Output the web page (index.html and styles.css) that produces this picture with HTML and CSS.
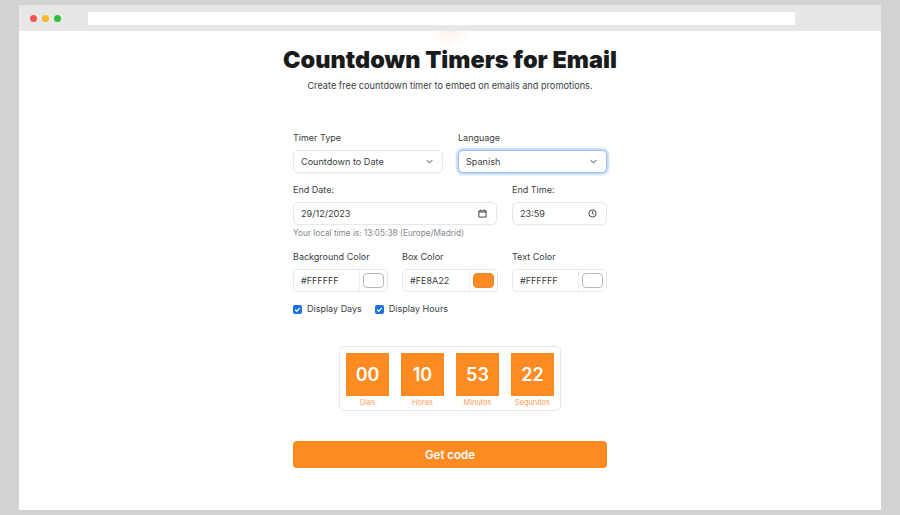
FILE: index.html
```html
<!DOCTYPE html>
<html lang="en">
<head>
    <meta charset="UTF-8">
    <meta name="viewport" content="width=device-width, initial-scale=1.0">
    <title>Countdown Timers for Email</title>
    <link rel="stylesheet" href="styles.css">
</head>
<body>

    <div class="window">
        <div class="titlebar">
            <div class="dots">
                <span class="dot red"></span>
                <span class="dot yellow"></span>
                <span class="dot green"></span>
            </div>
            <div class="urlbar"></div>
        </div>

        <div class="content">
            <h1>Countdown Timers for Email</h1>
            <p class="lead">Create free countdown timer to embed on emails and promotions.</p>

            <div class="form">
                <!-- Type and language -->
                <div class="row row-two">
                    <div class="group">
                        <div class="label">Timer Type</div>
                        <div class="field">
                            <span>Countdown to Date</span>
                            <svg class="chevron" viewBox="0 0 10 6"><path d="M1 1 5 5l4-4"/></svg>
                        </div>
                    </div>
                    <div class="group">
                        <div class="label">Language</div>
                        <div class="field focused">
                            <span>Spanish</span>
                            <svg class="chevron" viewBox="0 0 10 6"><path d="M1 1 5 5l4-4"/></svg>
                        </div>
                    </div>
                </div>

                <!-- End date -->
                <div class="row row-date">
                    <div class="group">
                        <div class="label">End Date:</div>
                        <div class="field">
                            <span>29/12/2023</span>
                            <svg class="icon" viewBox="0 0 10 10"><path d="M1 2h8v7H1zM1 3.4h8M3 .6V2M7 .6V2"/></svg>
                        </div>
                        <div class="hint">Your local time is: 13:05:38 (Europe/Madrid)</div>
                    </div>
                    <div class="group">
                        <div class="label">End Time:</div>
                        <div class="field">
                            <span>23:59</span>
                            <svg class="icon" viewBox="0 0 10 10"><circle cx="5" cy="5" r="4"/><path d="M5 2.6V5l1.7 1"/></svg>
                        </div>
                    </div>
                </div>

                <!-- Colors -->
                <div class="row row-colors">
                    <div class="group">
                        <div class="label">Background Color</div>
                        <div class="color-field">
                            <span class="hex">#FFFFFF</span>
                            <span class="swatch-cell"><span class="swatch"></span></span>
                        </div>
                    </div>
                    <div class="group">
                        <div class="label">Box Color</div>
                        <div class="color-field">
                            <span class="hex">#FE8A22</span>
                            <span class="swatch-cell"><span class="swatch orange"></span></span>
                        </div>
                    </div>
                    <div class="group">
                        <div class="label">Text Color</div>
                        <div class="color-field">
                            <span class="hex">#FFFFFF</span>
                            <span class="swatch-cell"><span class="swatch"></span></span>
                        </div>
                    </div>
                </div>

                <div class="checks">
                    <div class="check">
                        <span class="box"><svg viewBox="0 0 10 10"><path d="M2.4 5.2 4.2 7l3.4-3.8"/></svg></span>
                        Display Days
                    </div>
                    <div class="check">
                        <span class="box"><svg viewBox="0 0 10 10"><path d="M2.4 5.2 4.2 7l3.4-3.8"/></svg></span>
                        Display Hours
                    </div>
                </div>

                <!-- Preview -->
                <div class="preview">
                    <div class="timer">
                        <div class="unit"><div class="digits">00</div><div class="unit-name">Días</div></div>
                        <div class="unit"><div class="digits">10</div><div class="unit-name">Horas</div></div>
                        <div class="unit"><div class="digits">53</div><div class="unit-name">Minutos</div></div>
                        <div class="unit"><div class="digits">22</div><div class="unit-name">Segundos</div></div>
                    </div>
                </div>

                <button class="submit">Get code</button>
            </div>
        </div>
    </div>

</body>
</html>
```

FILE: styles.css
```css
* {
    box-sizing: border-box;
}
body {
    margin: 0;
    height: 515px;
    padding: 5px 19px;
    overflow: hidden;
    background-color: #d2d2d2;
    color: #3a3e42;
    font-family: Inter, "Liberation Sans", sans-serif;
    font-size: 9px;
}
.window {
    height: 505px;
    background-color: #fff;
}
.titlebar {
    display: flex;
    align-items: center;
    height: 26px;
    padding-right: 86px;
    background-color: #e7e7e7;
}
.dots {
    display: flex;
    gap: 5px;
    width: 69px;
    padding-left: 11px;
}
.dot {
    width: 7px;
    height: 7px;
    border-radius: 50%;
}
.red { background-color: #f4534f; }
.yellow { background-color: #f8b92e; }
.green { background-color: #27c13c; }
.urlbar {
    flex: 1;
    height: 13px;
    background-color: #fff;
}
.content {
    padding-top: 14px;
    text-align: center;
    background: radial-gradient(circle at 431px -4px, rgba(254, 138, 34, 0.12), rgba(254, 138, 34, 0) 22px);
}
h1 {
    margin: 0;
    color: #1a1b1d;
    font-size: 23.5px;
    font-weight: 900;
    line-height: 29px;
}
.lead {
    margin: 4px 0 0;
    font-size: 9.2px;
    line-height: 16px;
}
.form {
    width: 314px;
    margin: 36px auto 0;
    text-align: left;
}
.row {
    display: grid;
    column-gap: 15px;
}
.row-two {
    grid-template-columns: 150px 149px;
}
.row-date {
    grid-template-columns: 204px 95px;
    margin-top: 9px;
}
.row-colors {
    grid-template-columns: 95px 96px 95px;
    column-gap: 14px;
    margin-top: 10px;
}
.label {
    height: 20px;
    font-size: 9px;
    line-height: 16px;
}
.field {
    display: flex;
    justify-content: space-between;
    align-items: center;
    height: 23px;
    padding: 0 9px 0 7px;
    border: 1px solid #e6e8eb;
    border-radius: 5px;
    background-color: #fff;
    box-shadow: 0 1px 2px rgba(0, 0, 0, 0.03);
    font-size: 9.1px;
}
.focused {
    border-color: #9dbcf0;
    box-shadow: 0 0 2px 2px #c4d8fa;
}
.chevron {
    width: 7px;
    height: 5px;
    fill: none;
    stroke: #33373b;
    stroke-width: 1.3;
}
.icon {
    width: 9px;
    height: 9px;
    fill: none;
    stroke: #33373b;
    stroke-width: 1;
}
.hint {
    margin-top: 2px;
    color: #85898e;
    font-size: 8.25px;
    line-height: 12px;
}
.color-field {
    display: flex;
    height: 23px;
    border: 1px solid #e6e8eb;
    border-radius: 5px;
}
.hex {
    flex: 1;
    padding-left: 7px;
    font-size: 9px;
    line-height: 21px;
}
.swatch-cell {
    display: flex;
    align-items: center;
    justify-content: center;
    width: 28px;
    border-left: 1px solid #eceef0;
}
.swatch {
    width: 21px;
    height: 15px;
    border: 1px solid #b8b8b8;
    border-radius: 4px;
    background-color: #fff;
}
.orange {
    border-color: #e58a30;
    background-color: #fe8a22;
}
.checks {
    display: flex;
    gap: 13px;
    margin-top: 11px;
}
.check {
    display: flex;
    align-items: center;
    gap: 5px;
    font-size: 9px;
    line-height: 12px;
}
.box {
    display: flex;
    width: 9px;
    height: 9px;
    border-radius: 2px;
    background-color: #1b6fe0;
}
.box svg {
    width: 9px;
    height: 9px;
    fill: none;
    stroke: #fff;
    stroke-width: 1.4;
}
.preview {
    display: flex;
    justify-content: center;
    margin-top: 31px;
}
.timer {
    display: flex;
    gap: 12px;
    width: 222px;
    height: 65px;
    padding: 6px;
    border: 1px solid #e6e8eb;
    border-radius: 5px;
}
.unit {
    width: 43px;
    text-align: center;
}
.digits {
    height: 43px;
    background-color: #fe8a22;
    color: #fff;
    font-size: 18px;
    font-weight: 600;
    line-height: 44px;
}
.unit-name {
    margin-top: 2px;
    color: #fb9a55;
    font-size: 7.4px;
    line-height: 9px;
    white-space: nowrap;
}
.submit {
    display: block;
    width: 314px;
    height: 27px;
    margin-top: 30px;
    padding: 0;
    border: 0;
    border-radius: 4px;
    background-color: #fe8a22;
    color: #fff;
    font-family: inherit;
    font-size: 11.5px;
    font-weight: 600;
    cursor: pointer;
}
```
